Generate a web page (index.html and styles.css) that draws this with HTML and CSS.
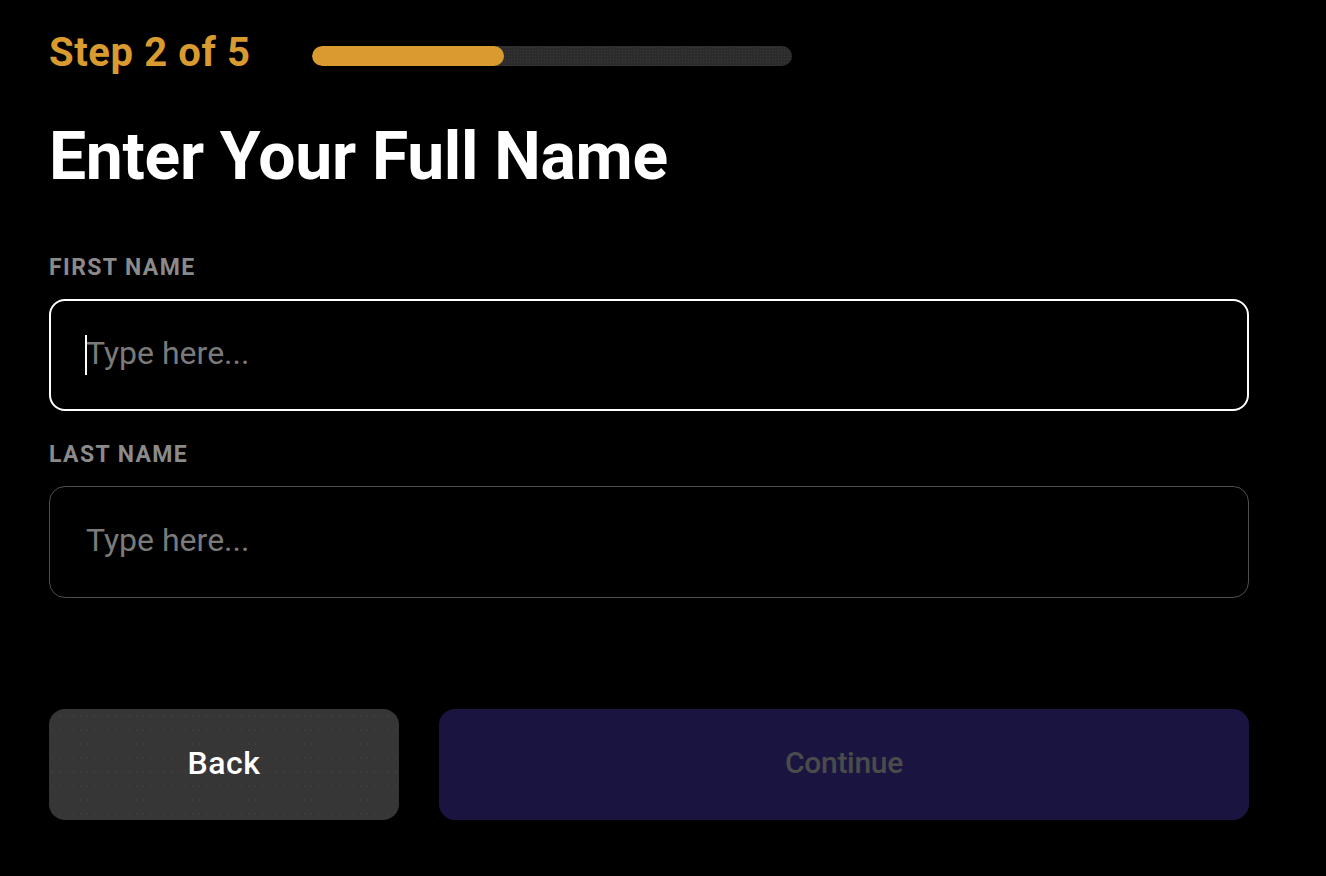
FILE: index.html
```html
<!DOCTYPE html>
<html lang="en">
<head>
<meta charset="utf-8">
<title>Enter Your Full Name</title>
<link rel="stylesheet" href="styles.css">
</head>
<body>
<main class="page">
  <header class="step-row">
    <span class="step-label">Step 2 of 5</span>
    <div class="progress"><div class="progress-fill" style="width:40%"></div></div>
  </header>
  <h1 class="title">Enter Your Full Name</h1>
  <form class="form">
    <label class="field">
      <span class="field-label">FIRST NAME</span>
      <span class="input-wrap is-focused">
        <input class="input" type="text" placeholder="Type here...">
        <span class="caret"></span>
      </span>
    </label>
    <label class="field">
      <span class="field-label">LAST NAME</span>
      <span class="input-wrap">
        <input class="input" type="text" placeholder="Type here...">
      </span>
    </label>
    <div class="actions">
      <button type="button" class="btn btn-back">Back</button>
      <button type="button" class="btn btn-continue" disabled>Continue</button>
    </div>
  </form>
</main>
</body>
</html>
```

FILE: styles.css
```css
* { box-sizing: border-box; }
html, body { margin: 0; padding: 0; background: #000; }
body { font-family: "Roboto", "Liberation Sans", sans-serif; color: #fff; }

.page {
  width: 1200px;
  margin-left: 49px;
  padding-top: 30px;
  display: flex;
  flex-direction: column;
}

.step-row {
  display: flex;
  align-items: center;
  gap: 62px;
  height: 46px;
}
.step-label {
  color: #d99a30;
  font-size: 40px;
  font-weight: 700;
  line-height: 46px;
  letter-spacing: 0.6px;
}
.progress {
  width: 480px;
  height: 20px;
  border-radius: 10px;
  margin-top: 6px;
  background-color: #2c2c2c;
  background-image: radial-gradient(circle, #3a3a3a 0.7px, transparent 0.9px);
  background-size: 3px 3px;
  overflow: hidden;
}
.progress-fill {
  height: 100%;
  background: #d99a30;
  border-radius: 10px;
}

.title {
  margin: 43px 0 0;
  font-size: 66px;
  font-weight: 700;
  line-height: 76px;
  letter-spacing: -0.3px;
}

.form { display: flex; flex-direction: column; margin-top: 60px; }

.field { display: flex; flex-direction: column; margin-bottom: 31px; }
.field:last-of-type { margin-bottom: 0; }
.field-label {
  color: #8a8a8a;
  font-size: 23px;
  font-weight: 700;
  line-height: 26px;
  letter-spacing: 1.4px;
  margin-bottom: 18px;
}

.input-wrap {
  position: relative;
  display: block;
  height: 112px;
  border: 1px solid #4e4e4e;
  border-radius: 16px;
}
.input-wrap.is-focused { border: 2px solid #fff; }
.input {
  width: 100%;
  height: 100%;
  background: transparent;
  border: 0;
  outline: none;
  color: #fff;
  padding: 0 0 4px 36px;
  font-family: inherit;
  font-size: 32px;
  font-weight: 400;
}
.input-wrap.is-focused .input { padding-left: 35px; }
.input::placeholder { color: #7a7a7a; }
.caret {
  position: absolute;
  left: 34px;
  top: 34px;
  width: 2px;
  height: 40px;
  background: #fff;
}

.actions {
  display: flex;
  gap: 40px;
  margin-top: 111px;
}
.btn {
  height: 111px;
  border: 0;
  border-radius: 16px;
  font-family: inherit;
  padding-bottom: 5px;
}
.btn-back {
  width: 350px;
  color: #fff;
  font-size: 32px;
  font-weight: 500;
  letter-spacing: 0.5px;
  background-color: #363636;
  background-image: radial-gradient(circle, #414141 0.6px, transparent 0.9px);
  background-size: 7px 14px;
}
.btn-continue {
  flex: 1;
  background: #1a1540;
  color: #4b4b4b;
  font-size: 30px;
  font-weight: 500;
  letter-spacing: -0.3px;
}
```
